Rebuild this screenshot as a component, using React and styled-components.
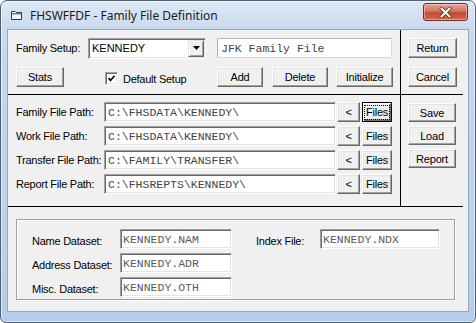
import React from 'react';
import styled, { createGlobalStyle } from 'styled-components';

const UI = '"Liberation Sans", Arial, sans-serif';
const MONO = '"Liberation Mono", "Courier New", monospace';

const GlobalStyle = createGlobalStyle`
  html, body {
    margin: 0;
    padding: 0;
    background: #ffffff;
  }
  body {
    width: 476px;
    height: 323px;
    overflow: hidden;
  }
`;

const Window = styled.div`
  box-sizing: border-box;
  width: 476px;
  height: 323px;
  display: flex;
  flex-direction: column;
  padding: 0 6px 10px 6px;
  border: 1px solid #4f5f74;
  border-radius: 7px 7px 6px 6px;
  background: linear-gradient(to bottom, #dfe9f5 0px, #c9d9ee 28px, #b6cde9 100%);
  box-shadow: inset 0 0 0 1px rgba(255, 255, 255, 0.55);
`;

const TitleBar = styled.div`
  height: 28px;
  display: flex;
  align-items: center;
  flex-shrink: 0;
`;

const TitleIcon = styled.svg`
  margin-left: 4px;
  width: 11px;
  height: 10px;
  flex-shrink: 0;
`;

const TitleText = styled.span`
  margin-left: 8px;
  font: 12px "Noto Sans", "Open Sans", sans-serif;
  color: #1b1b1b;
`;

const CloseButton = styled.div`
  box-sizing: border-box;
  margin-left: auto;
  margin-right: 1px;
  align-self: flex-start;
  margin-top: 2px;
  width: 45px;
  height: 18px;
  display: flex;
  align-items: center;
  justify-content: center;
  border: 1px solid #6e3027;
  border-radius: 3px;
  background: linear-gradient(to bottom, #e8a497 0%, #d7735f 45%, #c24a32 55%, #cf6a4f 100%);
  box-shadow: inset 0 0 0 1px rgba(255, 230, 220, 0.45);
`;

const Client = styled.div`
  box-sizing: border-box;
  height: 283px;
  border: 1px solid #94a8c2;
  background: #f0f0f0;
  display: flex;
  flex-direction: column;
  font: 11px ${UI};
  letter-spacing: -0.25px;
  color: #000;
`;

const TopPanel = styled.div`
  width: 455px;
  display: grid;
  grid-template-columns: 393px 62px;
  grid-template-rows: 65px 112px;
`;

const Cell = styled.div`
  box-sizing: border-box;
  border-bottom: 1px solid #000;
  border-right: ${p => (p.$divider ? '1px solid #000' : 'none')};
  padding: ${p => p.$pad};
  display: flex;
  flex-direction: column;
  gap: ${p => p.$gap}px;
`;

const Row = styled.div`
  display: flex;
  align-items: center;
  height: 20px;
`;

const Label = styled.span`
  width: ${p => p.$w}px;
  flex-shrink: 0;
  white-space: nowrap;
`;

const Btn = styled.button`
  box-sizing: border-box;
  width: ${p => p.$w}px;
  height: ${p => p.$h || 20}px;
  margin: 0 0 0 ${p => p.$ml || 0}px;
  padding: 0;
  flex-shrink: 0;
  background: #f0f0f0;
  border: 1px solid;
  border-color: ${p => (p.$focus ? '#000' : '#ffffff #696969 #696969 #ffffff')};
  box-shadow: ${p =>
    p.$focus
      ? 'inset 1px 1px 0 #ffffff, inset -1px -1px 0 #696969, inset -2px -2px 0 #a0a0a0'
      : 'inset -1px -1px 0 #a0a0a0, inset 1px 1px 0 #e3e3e3'};
  font: 11px ${UI};
  letter-spacing: -0.2px;
  color: #000;
  display: flex;
  align-items: center;
  justify-content: center;
`;

const FocusText = styled.span`
  outline: 1px dotted #000;
  outline-offset: 0;
  padding: 0 1px;
  line-height: 13px;
`;

const Field = styled.div`
  box-sizing: border-box;
  width: ${p => p.$w}px;
  height: 20px;
  flex-shrink: 0;
  background: #ffffff;
  border: 1px solid;
  border-color: #a0a0a0 #ffffff #ffffff #a0a0a0;
  box-shadow: inset 1px 1px 0 #696969, inset -1px -1px 0 #e3e3e3;
  padding-left: ${p => p.$pl || 3}px;
  display: flex;
  align-items: center;
  font: 11.5px ${MONO};
  letter-spacing: 0;
  color: ${p => p.$tone || '#444444'};
  white-space: nowrap;
  overflow: hidden;
`;

const FlatField = styled(Field)`
  margin-left: 11px;
  border-color: #b3b3b3 #dadada #dadada #b3b3b3;
  box-shadow: none;
`;

const Combo = styled.div`
  box-sizing: border-box;
  width: 118px;
  height: 21px;
  flex-shrink: 0;
  background: #ffffff;
  border: 1px solid;
  border-color: #a0a0a0 #ffffff #ffffff #a0a0a0;
  box-shadow: inset 1px 1px 0 #696969, inset -1px -1px 0 #e3e3e3;
  padding: 2px 1px 2px 3px;
  display: flex;
  align-items: center;
  font: 11px ${UI};
  letter-spacing: 0;
`;

const ComboValue = styled.span`
  flex: 1;
`;

const ComboArrow = styled.div`
  box-sizing: border-box;
  width: 16px;
  height: 17px;
  background: #f0f0f0;
  border: 1px solid;
  border-color: #e3e3e3 #696969 #696969 #e3e3e3;
  box-shadow: inset 1px 1px 0 #ffffff, inset -1px -1px 0 #a0a0a0;
  display: flex;
  align-items: center;
  justify-content: center;
`;

const CheckArea = styled.label`
  box-sizing: border-box;
  width: 153px;
  padding-left: 41px;
  display: flex;
  align-items: center;
  gap: 5px;
  padding-top: 3px;
`;

const CheckBox = styled.span`
  box-sizing: border-box;
  width: 13px;
  height: 13px;
  background: #ffffff;
  border: 1px solid;
  border-color: #a0a0a0 #ffffff #ffffff #a0a0a0;
  box-shadow: inset 1px 1px 0 #696969, inset -1px -1px 0 #e3e3e3;
  display: flex;
  align-items: center;
  justify-content: center;
`;

const GroupBox = styled.div`
  box-sizing: border-box;
  margin: 12px 0 0 8px;
  width: 439px;
  height: 81px;
  border: 1px solid #a0a0a0;
  box-shadow: inset 1px 1px 0 #ffffff, 1px 1px 0 #ffffff;
  padding: 9px 0 0 15px;
  display: grid;
  grid-template-columns: 88px 112px 24px 64px 120px;
  grid-template-rows: repeat(3, 20px);
  row-gap: 4px;
  align-items: center;
`;

const GroupLabel = styled.span`
  white-space: nowrap;
  padding-top: 4px;
  grid-column: ${p => p.$col};
`;

const GroupField = styled(Field)`
  grid-column: ${p => p.$col};
`;

const paths = [
  { label: 'Family File Path:', value: 'C:\\FHSDATA\\KENNEDY\\', focus: true },
  { label: 'Work File Path:', value: 'C:\\FHSDATA\\KENNEDY\\' },
  { label: 'Transfer File Path:', value: 'C:\\FAMILY\\TRANSFER\\' },
  { label: 'Report File Path:', value: 'C:\\FHSREPTS\\KENNEDY\\' },
];

export default function App() {
  return (
    <>
      <GlobalStyle />
      <Window>
        <TitleBar>
          <TitleIcon viewBox="0 0 11 10">
            <path d="M0.5 1.5 H4 L5 2.5 H10.5 V9.5 H0.5 Z" fill="#f3f5f7" stroke="#2f3a46" />
            <rect x="1" y="3" width="9" height="1.5" fill="#6b86a8" />
          </TitleIcon>
          <TitleText>FHSWFFDF - Family File Definition</TitleText>
          <CloseButton>
            <svg width="13" height="11" viewBox="0 0 13 11">
              <path d="M2.5 1.5 L10.5 9.5 M10.5 1.5 L2.5 9.5" stroke="#5a231b" strokeWidth="3.8" strokeLinecap="round" />
              <path d="M2.5 1.5 L10.5 9.5 M10.5 1.5 L2.5 9.5" stroke="#ffffff" strokeWidth="2.2" strokeLinecap="round" />
            </svg>
          </CloseButton>
        </TitleBar>
        <Client>
          <TopPanel>
            <Cell $divider $pad="8px 0 0 8px" $gap={9}>
              <Row>
                <Label $w={72}>Family Setup:</Label>
                <Combo>
                  <ComboValue>KENNEDY</ComboValue>
                  <ComboArrow>
                    <svg width="7" height="4" viewBox="0 0 7 4">
                      <polygon points="0,0 7,0 3.5,4" fill="#000" />
                    </svg>
                  </ComboArrow>
                </Combo>
                <FlatField $w={175}>JFK Family File</FlatField>
              </Row>
              <Row>
                <Btn $w={48}>Stats</Btn>
                <CheckArea>
                  <CheckBox>
                    <svg width="9" height="9" viewBox="0 0 9 9">
                      <path d="M1.5 4 L3.5 6.5 L7.5 1.8" fill="none" stroke="#000" strokeWidth="1.7" />
                    </svg>
                  </CheckBox>
                  Default Setup
                </CheckArea>
                <Btn $w={46}>Add</Btn>
                <Btn $w={56} $ml={9}>Delete</Btn>
                <Btn $w={57} $ml={8}>Initialize</Btn>
              </Row>
            </Cell>
            <Cell $pad="8px 0 0 7px" $gap={9}>
              <Btn $w={49}>Return</Btn>
              <Btn $w={49}>Cancel</Btn>
            </Cell>
            <Cell $divider $pad="7px 0 0 8px" $gap={4}>
              {paths.map(p => (
                <Row key={p.label}>
                  <Label $w={88}>{p.label}</Label>
                  <Field $w={232}>{p.value}</Field>
                  <Btn $w={23} $ml={1}>&lt;</Btn>
                  <Btn $w={30} $ml={2} $focus={p.focus}>
                    {p.focus ? <FocusText>Files</FocusText> : 'Files'}
                  </Btn>
                </Row>
              ))}
            </Cell>
            <Cell $pad="8px 0 0 7px" $gap={4}>
              <Btn $w={48} $h={19}>Save</Btn>
              <Btn $w={48} $h={19}>Load</Btn>
              <Btn $w={48} $h={19}>Report</Btn>
            </Cell>
          </TopPanel>
          <GroupBox>
            <GroupLabel $col={1}>Name Dataset:</GroupLabel>
            <GroupField $col={2} $w={112} $pl={2} $tone="#5a5a5a">KENNEDY.NAM</GroupField>
            <GroupLabel $col={4}>Index File:</GroupLabel>
            <GroupField $col={5} $w={120} $pl={2} $tone="#5a5a5a">KENNEDY.NDX</GroupField>
            <GroupLabel $col={1}>Address Dataset:</GroupLabel>
            <GroupField $col={2} $w={112} $pl={2} $tone="#5a5a5a">KENNEDY.ADR</GroupField>
            <GroupLabel $col={1}>Misc. Dataset:</GroupLabel>
            <GroupField $col={2} $w={112} $pl={2} $tone="#5a5a5a">KENNEDY.OTH</GroupField>
          </GroupBox>
        </Client>
      </Window>
    </>
  );
}
